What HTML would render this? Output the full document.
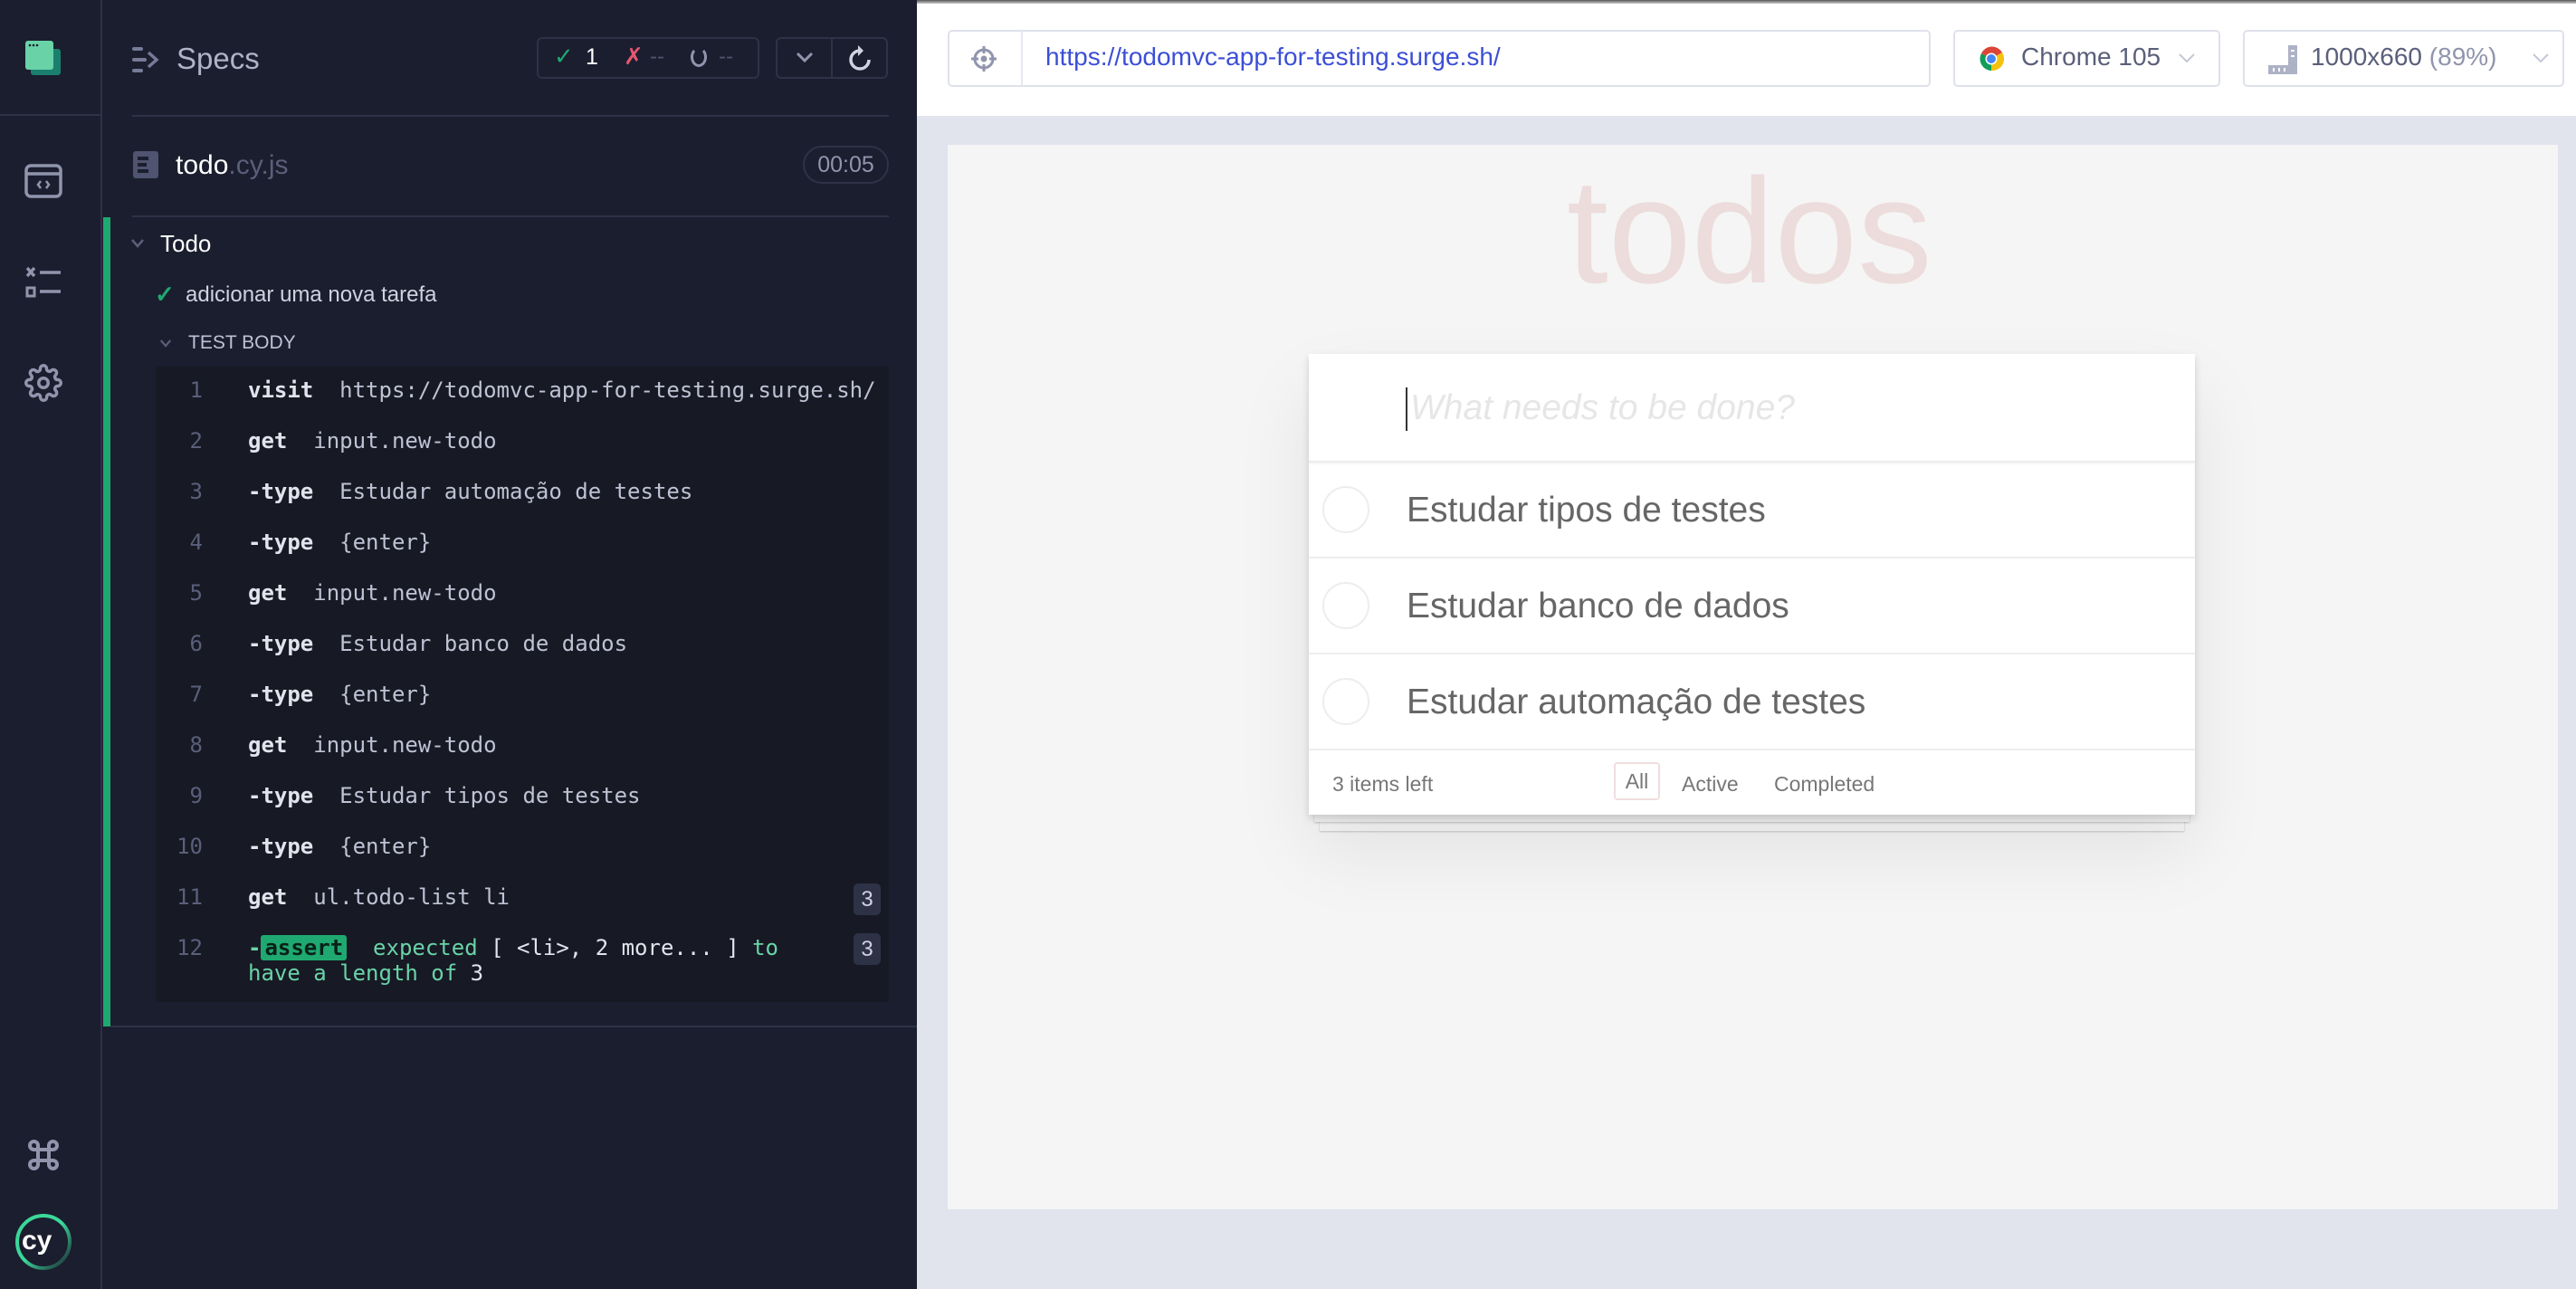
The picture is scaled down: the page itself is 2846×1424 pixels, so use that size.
<!DOCTYPE html>
<html><head><meta charset="utf-8"><style>
*{margin:0;padding:0;box-sizing:border-box}
body{width:2846px;height:1424px;overflow:hidden;background:#e1e3ed;font-family:"Liberation Sans",sans-serif;position:relative}
.a{position:absolute}
#side{left:0;top:0;width:113px;height:1424px;background:#1b1e2e;border-right:2px solid #2e3247}
#rep{left:113px;top:0;width:900px;height:1424px;background:#1b1e2e}
.line{height:2px;background:#2e3247}
.mono{font-family:"DejaVu Sans Mono","Liberation Mono",monospace}
.ln{position:absolute;left:172px;width:52px;text-align:right;color:#5a5f7a;font-size:24px}
.cmd{position:absolute;left:274px;font-size:24px;color:#d0d2e0;white-space:pre}
.cmd b{color:#e1e3ed;font-weight:bold}
.cmd span{color:#bfc2d4}
.badge{position:absolute;left:943px;width:30px;height:35px;background:#2e3247;border-radius:5px;color:#d0d2e0;font-size:24px;text-align:center;line-height:35px}
.box{border:2px solid #dfe1eb;border-radius:5px;background:#fff}
.item{position:absolute;left:0;width:979px;height:106px;border-top:2px solid #ededed}
.circ{position:absolute;left:15px;top:26px;width:52px;height:52px;border:2px solid #ededed;border-radius:50%}
.itxt{position:absolute;left:108px;top:31px;font-size:39px;color:#666;font-weight:300}
</style></head><body>
<div class="a" style="left:0;top:0;width:2846px;height:4px;background:linear-gradient(#555,#ccc)"></div>

<div id="side" class="a">
 <div class="a" style="left:0;top:126px;width:113px;height:2px;background:#2e3247"></div>
 <svg class="a" style="left:26px;top:44px" width="44" height="40" viewBox="0 0 44 40"><rect x="8" y="10" width="33" height="29" rx="3" fill="#1a7f6e"/><rect x="2" y="1" width="31" height="32" rx="3" fill="#69d3a7"/><circle cx="7" cy="6" r="1.3" fill="#1b1e2e"/><circle cx="11" cy="6" r="1.3" fill="#1b1e2e"/><circle cx="15" cy="6" r="1.3" fill="#1b1e2e"/></svg>
 <svg class="a" style="left:27px;top:181px" width="42" height="38" viewBox="0 0 42 38" fill="none" stroke="#9095ad" stroke-width="3.5"><rect x="2" y="2" width="38" height="34" rx="5"/><line x1="2" y1="11" x2="40" y2="11"/><path d="M18 19l-3 4 3 4M24 19l3 4-3 4" stroke-width="2.5"/></svg>
 <svg class="a" style="left:27px;top:294px" width="42" height="36" viewBox="0 0 42 36" stroke="#9095ad" stroke-width="3.5" fill="none"><path d="M3 2l8 9M11 2l-8 9"/><line x1="17" y1="7" x2="40" y2="7"/><rect x="3" y="24" width="8" height="9" stroke-width="3"/><line x1="17" y1="28" x2="40" y2="28"/></svg>
 <svg class="a" style="left:27px;top:402px" width="42" height="42" viewBox="0 0 24 24" fill="none" stroke="#9095ad" stroke-width="2"><circle cx="12" cy="12" r="3"/><path d="M19.4 15a1.650 1.650 0 0 0 .33 1.820l.06.06a2 2 0 1 1-2.830 2.830l-.06-.06a1.650 1.650 0 0 0-1.820-.33 1.650 1.650 0 0 0-1 1.510V21a2 2 0 1 1-4 0v-.09A1.650 1.650 0 0 0 9 19.4a1.650 1.650 0 0 0-1.820.33l-.06.06a2 2 0 1 1-2.830-2.830l.06-.06A1.650 1.650 0 0 0 4.680 15a1.650 1.650 0 0 0-1.510-1H3a2 2 0 1 1 0-4h.09A1.650 1.650 0 0 0 4.6 9a1.650 1.650 0 0 0-.33-1.820l-.06-.06a2 2 0 1 1 2.830-2.830l.06.06A1.650 1.650 0 0 0 9 4.680a1.650 1.650 0 0 0 1-1.510V3a2 2 0 1 1 4 0v.09a1.650 1.650 0 0 0 1 1.510 1.650 1.650 0 0 0 1.820-.33l.06-.06a2 2 0 1 1 2.830 2.830l-.06.06A1.650 1.650 0 0 0 19.4 9a1.650 1.650 0 0 0 1.510 1H21a2 2 0 1 1 0 4h-.09a1.650 1.650 0 0 0-1.510 1z"/></svg>
 <svg class="a" style="left:31px;top:1259px" width="34" height="34" viewBox="0 0 34 34" fill="none" stroke="#9095ad" stroke-width="4"><path d="M11 11V6.5A4.5 4.5 0 1 0 6.5 11H27.5A4.5 4.5 0 1 0 23 6.5V27.5A4.5 4.5 0 1 0 27.5 23H6.5A4.5 4.5 0 1 0 11 27.5Z"/></svg>
 <svg class="a" style="left:15px;top:1339px" width="66" height="66" viewBox="0 0 66 66"><defs><linearGradient id="g" x1="0" y1="0" x2="1" y2="1"><stop offset="0.5" stop-color="#3ad89a"/><stop offset="1" stop-color="#1b1e2e"/></linearGradient></defs><circle cx="33" cy="33" r="29" fill="none" stroke="url(#g)" stroke-width="4"/><text x="9" y="41" font-family="Liberation Sans" font-weight="bold" font-size="30" fill="#fff">cy</text></svg>
</div>

<div id="rep" class="a"></div>
<svg class="a" style="left:146px;top:52px" width="30" height="28" viewBox="0 0 30 28" fill="#767b97"><rect x="0" y="0" width="12" height="4" rx="2"/><rect x="0" y="12" width="16" height="4" rx="2"/><rect x="0" y="24" width="12" height="4" rx="2"/><path d="M18 6l9 8-9 8" stroke="#767b97" stroke-width="3.5" fill="none"/></svg>
<div class="a" style="left:195px;top:46px;font-size:33px;color:#afb3c7">Specs</div>
<div class="a" style="left:593px;top:41px;width:246px;height:46px;border:2px solid #2e3247;border-radius:6px"></div>
<div class="a" style="left:612px;top:47px;font-size:26px;color:#1fa971">✓</div>
<div class="a" style="left:647px;top:49px;font-size:25px;color:#fff">1</div>
<div class="a" style="left:689px;top:47px;font-size:26px;color:#e45770">✗</div>
<div class="a" style="left:718px;top:49px;font-size:24px;color:#4f5470">--</div>
<div class="a" style="left:763px;top:52px;width:18px;height:22px;border:3px solid #9095ad;border-top-color:transparent;border-radius:50%"></div>
<div class="a" style="left:794px;top:49px;font-size:24px;color:#4f5470">--</div>
<div class="a" style="left:857px;top:41px;width:124px;height:46px;border:2px solid #2e3247;border-radius:6px"></div>
<div class="a" style="left:918px;top:43px;width:2px;height:42px;background:#2e3247"></div>
<svg class="a" style="left:879px;top:56px" width="20" height="14" viewBox="0 0 20 14"><path d="M2 3l8 8 8-8" stroke="#9095ad" stroke-width="3" fill="none"/></svg>
<svg class="a" style="left:937px;top:48px" width="26" height="32" viewBox="0 0 26 32"><path d="M13 8a10 10 0 1 0 10 10" stroke="#d0d2e0" stroke-width="3.5" fill="none"/><path d="M11 2l6 6-6 6z" fill="#d0d2e0"/></svg>
<div class="a line" style="left:146px;top:127px;width:836px"></div>
<svg class="a" style="left:146px;top:166px" width="30" height="32" viewBox="0 0 30 32"><rect x="1" y="1" width="28" height="30" rx="3" fill="#4f5470"/><rect x="6" y="7" width="12" height="4" fill="#1b1e2e"/><rect x="6" y="14" width="10" height="4" fill="#1b1e2e"/><rect x="6" y="21" width="12" height="4" fill="#1b1e2e"/></svg>
<div class="a" style="left:194px;top:166px;font-size:30px;color:#fff">todo<span style="color:#5a5f7a">.cy.js</span></div>
<div class="a" style="left:887px;top:161px;width:95px;height:42px;border:2px solid #2e3247;border-radius:21px;color:#9095ad;font-size:25px;text-align:center;line-height:38px">00:05</div>
<div class="a line" style="left:146px;top:238px;width:836px"></div>
<div class="a" style="left:114px;top:240px;width:8px;height:894px;background:#1fa971"></div>
<div class="a" style="left:122px;top:1133px;width:891px;height:2px;background:#2e3247"></div>
<svg class="a" style="left:144px;top:263px" width="16" height="12" viewBox="0 0 16 12"><path d="M2 2l6 7 6-7" stroke="#5a5f7a" stroke-width="2.5" fill="none"/></svg>
<div class="a" style="left:177px;top:254px;font-size:26px;color:#fff">Todo</div>
<div class="a" style="left:171px;top:310px;font-size:26px;color:#1fa971;font-weight:bold">✓</div>
<div class="a" style="left:205px;top:312px;font-size:24px;color:#d0d2e0">adicionar uma nova tarefa</div>
<svg class="a" style="left:176px;top:374px" width="14" height="11" viewBox="0 0 16 12"><path d="M2 2l6 7 6-7" stroke="#5a5f7a" stroke-width="2.5" fill="none"/></svg>
<div class="a" style="left:208px;top:367px;font-size:21px;color:#bfc2d4">TEST BODY</div>
<div class="a" style="left:172px;top:405px;width:810px;height:702px;background:#171924"></div>
<div class="mono">
<div class="ln" style="top:417px">1</div><div class="cmd" style="top:417px"><b>visit</b>  <span>https://todomvc-app-for-testing.surge.sh/</span></div>
<div class="ln" style="top:473px">2</div><div class="cmd" style="top:473px"><b>get</b>  <span>input.new-todo</span></div>
<div class="ln" style="top:529px">3</div><div class="cmd" style="top:529px"><b>-type</b>  <span>Estudar automação de testes</span></div>
<div class="ln" style="top:585px">4</div><div class="cmd" style="top:585px"><b>-type</b>  <span>{enter}</span></div>
<div class="ln" style="top:641px">5</div><div class="cmd" style="top:641px"><b>get</b>  <span>input.new-todo</span></div>
<div class="ln" style="top:697px">6</div><div class="cmd" style="top:697px"><b>-type</b>  <span>Estudar banco de dados</span></div>
<div class="ln" style="top:753px">7</div><div class="cmd" style="top:753px"><b>-type</b>  <span>{enter}</span></div>
<div class="ln" style="top:809px">8</div><div class="cmd" style="top:809px"><b>get</b>  <span>input.new-todo</span></div>
<div class="ln" style="top:865px">9</div><div class="cmd" style="top:865px"><b>-type</b>  <span>Estudar tipos de testes</span></div>
<div class="ln" style="top:921px">10</div><div class="cmd" style="top:921px"><b>-type</b>  <span>{enter}</span></div>
<div class="ln" style="top:977px">11</div><div class="cmd" style="top:977px"><b>get</b>  <span>ul.todo-list li</span></div>
<div class="ln" style="top:1033px">12</div><div class="cmd" style="top:1033px;color:#69d3a7"><b style="color:#69d3a7">-</b><b style="background:#1fa971;color:#0a2018;padding:0 4px;border-radius:3px">assert</b>  expected <span style="color:#e1e3ed">[ &lt;li&gt;, 2 more... ]</span> to
have a length of <span style="color:#e1e3ed">3</span></div>
</div>
<div class="badge" style="top:976px">3</div>
<div class="badge" style="top:1031px">3</div>

<div class="a" style="left:1013px;top:4px;width:1833px;height:124px;background:#fff"></div>
<div class="a box" style="left:1047px;top:33px;width:1086px;height:63px"></div>
<div class="a" style="left:1128px;top:35px;width:2px;height:59px;background:#e6e8f0"></div>
<svg class="a" style="left:1071px;top:49px" width="32" height="32" viewBox="0 0 32 32" fill="none" stroke="#9095ad" stroke-width="3"><circle cx="16" cy="16" r="10"/><path d="M16 2v8M16 22v8M2 16h8M22 16h8"/><circle cx="16" cy="16" r="2" fill="#9095ad"/></svg>
<div class="a" style="left:1155px;top:47px;font-size:28px;color:#3c4fd6">https://todomvc-app-for-testing.surge.sh/</div>
<div class="a box" style="left:2158px;top:33px;width:295px;height:63px"></div>
<svg class="a" style="left:2185px;top:50px" width="30" height="30" viewBox="0 0 30 30"><path d="M15 15L4 9A13 13 0 0 1 27 8Z" fill="#db4437"/><path d="M15 15L27 8A13 13 0 0 1 15 28Z" fill="#f4c20d"/><path d="M15 15L15 28A13 13 0 0 1 4 9Z" fill="#0f9d58"/><circle cx="15" cy="15" r="6.5" fill="#fff"/><circle cx="15" cy="15" r="5" fill="#4285f4"/></svg>
<div class="a" style="left:2233px;top:47px;font-size:28px;color:#5a5f7a">Chrome 105</div>
<svg class="a" style="left:2406px;top:58px" width="20" height="12"><path d="M2 2l8 8 8-8" stroke="#c4c7d6" stroke-width="2" fill="none"/></svg>
<div class="a box" style="left:2478px;top:33px;width:355px;height:63px"></div>
<svg class="a" style="left:2506px;top:50px" width="32" height="32" viewBox="0 0 32 32" fill="#aeb2c6"><path d="M22 0h10v32H0V22h22z"/><rect x="5" y="25" width="2" height="4" fill="#fff"/><rect x="11" y="25" width="2" height="4" fill="#fff"/><rect x="17" y="25" width="2" height="4" fill="#fff"/><rect x="25" y="5" width="4" height="2" fill="#fff"/><rect x="25" y="11" width="4" height="2" fill="#fff"/></svg>
<div class="a" style="left:2553px;top:47px;font-size:28px;color:#5a5f7a">1000x660 <span style="color:#9095ad">(89%)</span></div>
<svg class="a" style="left:2797px;top:58px" width="20" height="12"><path d="M2 2l8 8 8-8" stroke="#c4c7d6" stroke-width="2" fill="none"/></svg>

<div class="a" style="left:1047px;top:160px;width:1779px;height:1176px;background:#f5f5f5"></div>
<div class="a" style="left:1731px;top:160px;width:400px;text-align:center;font-size:165px;color:#eddcdc;font-weight:100;line-height:190px">todos</div>
<div class="a" style="left:1458px;top:890px;width:955px;height:28px;background:#f6f6f6;box-shadow:0 1px 2px rgba(0,0,0,.2)"></div>
<div class="a" style="left:1452px;top:890px;width:967px;height:18px;background:#f6f6f6;box-shadow:0 1px 2px rgba(0,0,0,.2)"></div>
<div class="a" style="left:1446px;top:391px;width:979px;height:509px;background:#fff;box-shadow:0 4px 8px rgba(0,0,0,.15),0 40px 80px rgba(0,0,0,.08)">
 <div class="a" style="left:107px;top:37px;width:2px;height:48px;background:#333"></div>
 <div class="a" style="left:112px;top:38px;font-size:39px;font-style:italic;color:#e6e6e6">What needs to be done?</div>
 <div class="item" style="top:118px;box-shadow:inset 0 2px 2px rgba(0,0,0,.04)"><div class="circ"></div><div class="itxt">Estudar tipos de testes</div></div>
 <div class="item" style="top:224px"><div class="circ"></div><div class="itxt">Estudar banco de dados</div></div>
 <div class="item" style="top:330px"><div class="circ"></div><div class="itxt">Estudar automação de testes</div></div>
 <div class="item" style="top:436px;height:73px">
  <div class="a" style="left:26px;top:24px;font-size:23px;color:#777">3 items left</div>
  <div class="a" style="left:337px;top:13px;width:51px;height:42px;border:2px solid #f0dede;border-radius:4px;font-size:23px;color:#777;text-align:center;line-height:38px">All</div>
  <div class="a" style="left:412px;top:24px;font-size:23px;color:#777">Active</div>
  <div class="a" style="left:514px;top:24px;font-size:23px;color:#777">Completed</div>
 </div>
</div>
</body></html>
